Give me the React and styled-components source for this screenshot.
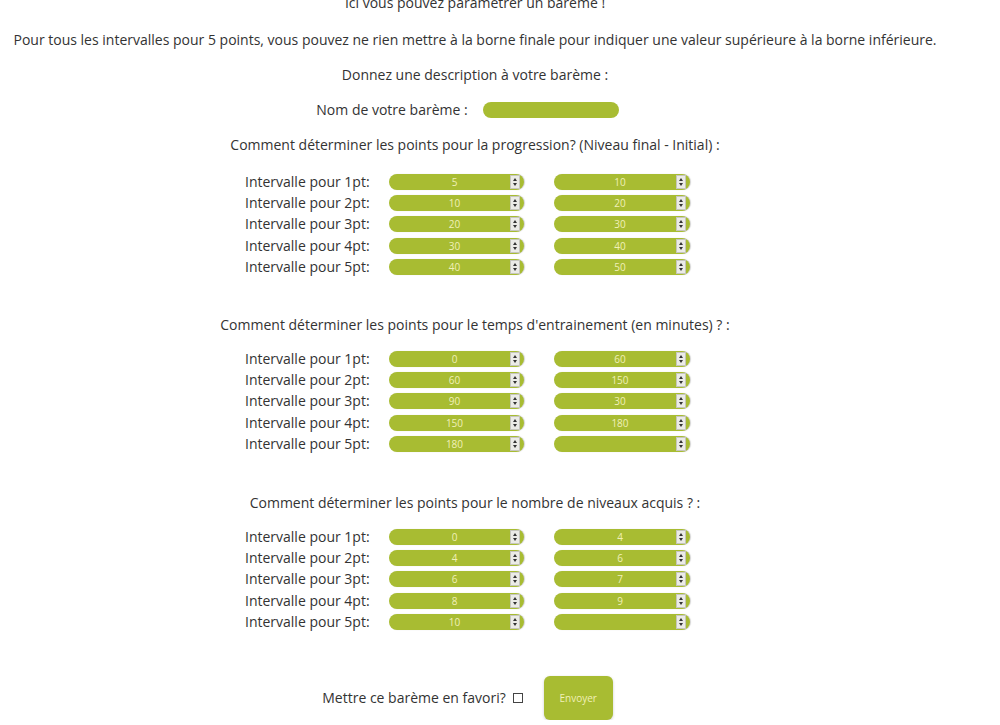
import React from "react"
import styled, { createGlobalStyle } from "styled-components"

const sections = [
  {
    title: "Comment déterminer les points pour la progression? (Niveau final - Initial) :",
    top: 15,
    tableTop: 16,
    rows: [["5", "10"], ["10", "20"], ["20", "30"], ["30", "40"], ["40", "50"]],
  },
  {
    title: "Comment déterminer les points pour le temps d'entrainement (en minutes) ? :",
    top: 37,
    tableTop: 13,
    rows: [["0", "60"], ["60", "150"], ["90", "30"], ["150", "180"], ["180", ""]],
  },
  {
    title: "Comment déterminer les points pour le nombre de niveaux acquis ? :",
    top: 38,
    tableTop: 13,
    rows: [["0", "4"], ["4", "6"], ["6", "7"], ["8", "9"], ["10", ""]],
  },
]

export default function App() {
  return (
    <>
      <Global />
      <Page>
        <Line $top={-7}>Ici vous pouvez paramétrer un barème !</Line>
        <Line $top={17}>
          Pour tous les intervalles pour 5 points, vous pouvez ne rien mettre à la borne finale pour indiquer une valeur supérieure à la borne inférieure.
        </Line>
        <Line $top={15}>Donnez une description à votre barème :</Line>
        <NameRow>
          <span>Nom de votre barème :</span>
          <NameInput type="text" />
        </NameRow>
        {sections.map((s, i) => (
          <Section key={i} $top={s.top}>
            <Line>{s.title}</Line>
            <Table $top={s.tableTop}>
              {s.rows.map(([a, b], j) => (
                <React.Fragment key={j}>
                  <Label>Intervalle pour {j + 1}pt:</Label>
                  <NumberField value={a} width={135} />
                  <NumberField value={b} width={136} end />
                </React.Fragment>
              ))}
            </Table>
          </Section>
        ))}
        <Footer>
          <span>Mettre ce barème en favori?</span>
          <Check type="checkbox" />
          <SendButton>Envoyer</SendButton>
        </Footer>
      </Page>
    </>
  )
}

function NumberField({ value, width, end }) {
  return (
    <Field $width={width} $end={end}>
      <Value>{value}</Value>
      <Spinner>
        <Arrow $up />
        <Arrow />
      </Spinner>
    </Field>
  )
}

const Global = createGlobalStyle`
  body {
    margin: 0;
    background: #fff;
    font-family: "Open Sans", "Noto Sans", sans-serif;
    font-size: 14px;
    color: #333;
  }
`

const Page = styled.div`
  width: 950px;
  display: flex;
  flex-direction: column;
  align-items: center;
  text-align: center;
  line-height: 20px;
  overflow: hidden;
`

const Line = styled.div`
  margin-top: ${p => p.$top || 0}px;
  white-space: nowrap;
`

const NameRow = styled.div`
  margin-top: 15px;
  margin-right: 15px;
  display: flex;
  align-items: center;
  gap: 15px;
  height: 20px;
`

const NameInput = styled.input`
  width: 136px;
  height: 16px;
  box-sizing: border-box;
  border: none;
  border-radius: 8px;
  background: #a8bc32;
  padding: 0;
  outline: none;
`

const Section = styled.div`
  margin-top: ${p => p.$top}px;
  display: flex;
  flex-direction: column;
  align-items: center;
`

const Table = styled.div`
  margin-top: ${p => p.$top}px;
  margin-left: -15px;
  display: grid;
  grid-template-columns: 144px 135px 166px;
  grid-auto-rows: 21.4px;
  align-items: center;
  text-align: left;
`

const Label = styled.span`
  white-space: nowrap;
`

const Field = styled.div`
  width: ${p => p.$width}px;
  justify-self: ${p => (p.$end ? "end" : "start")};
  height: 16px;
  box-sizing: border-box;
  border-radius: 8px;
  background: #a8bc32;
  display: flex;
  align-items: center;
  padding-right: 4px;
  box-shadow: 1px 0 1px rgba(0, 0, 0, 0.18);
`

const Value = styled.span`
  flex: 1;
  text-align: center;
  font-size: 10px;
  line-height: 16px;
  color: #f1f0b8;
  padding-left: 10px;
`

const Spinner = styled.span`
  width: 10px;
  height: 14px;
  background: #ebebe7;
  border: 1px solid #c6c6bc;
  box-sizing: border-box;
  display: flex;
  flex-direction: column;
  align-items: center;
  justify-content: space-evenly;
`

const Arrow = styled.span`
  width: 0;
  height: 0;
  border-left: 2px solid transparent;
  border-right: 2px solid transparent;
  ${p => (p.$up ? "border-bottom: 3px solid #333;" : "border-top: 3px solid #333;")}
`

const Footer = styled.div`
  margin-top: 43px;
  margin-right: 15px;
  display: flex;
  align-items: center;
  height: 44px;
`

const Check = styled.input`
  appearance: none;
  width: 10px;
  height: 10px;
  margin: 0 0 0 7px;
  border: 1px solid #444;
  box-sizing: border-box;
`

const SendButton = styled.button`
  margin-left: 21px;
  width: 69px;
  height: 44px;
  border: none;
  border-radius: 6px;
  background: #a8bc32;
  color: #f1f0b8;
  font-family: "Open Sans", sans-serif;
  font-size: 10px;
  box-shadow: 0 1px 3px rgba(0, 0, 0, 0.2);
  padding: 0;
`
